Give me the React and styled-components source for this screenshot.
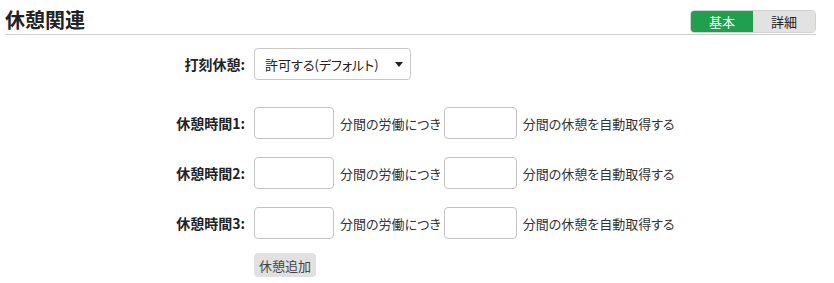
import React from 'react';
import styled, { createGlobalStyle } from 'styled-components';

const GlobalStyle = createGlobalStyle`
    body {
        margin: 0;
        background: #fff;
        font-family: "Noto Sans CJK JP", "Noto Sans", sans-serif;
        color: #333;
    }
`;

const rows = [1, 2, 3];

const App = () => (
    <Page>
        <GlobalStyle />
        <Header>
            <Title>休憩関連</Title>
            <Toggle>
                <ToggleItem active>基本</ToggleItem>
                <ToggleItem>詳細</ToggleItem>
            </Toggle>
        </Header>
        <Form>
            <Row gap={27}>
                <Label>打刻休憩:</Label>
                <Select>
                    <span>許可する(デフォルト)</span>
                    <Caret />
                </Select>
            </Row>
            {rows.map((n) => (
                <Row key={n} gap={n === 3 ? 14 : 18}>
                    <Label>休憩時間{n}:</Label>
                    <Inline>
                        <Input wide />
                        <Text>分間の労働につき</Text>
                        <Input />
                        <Text>分間の休憩を自動取得する</Text>
                    </Inline>
                </Row>
            ))}
            <Row>
                <span />
                <AddButton>休憩追加</AddButton>
            </Row>
        </Form>
    </Page>
);

export default App;

const Page = styled.div`
    width: 834px;
    height: 283px;
    padding: 0 18px 0 5px;
    box-sizing: border-box;
`;

const Header = styled.div`
    display: flex;
    justify-content: space-between;
    align-items: flex-end;
    padding-top: 8px;
    border-bottom: 1px solid #cfcfcf;
`;

const Title = styled.h1`
    margin: 0 0 2px;
    font-size: 20px;
    font-weight: bold;
    line-height: 24px;
    color: #222;
    font-feature-settings: "palt";
`;

const Toggle = styled.div`
    display: flex;
    border: 1px solid #d2d2d2;
    border-radius: 4px;
    overflow: hidden;
    margin-bottom: 1px;
`;

const ToggleItem = styled.div`
    width: 62px;
    height: 21px;
    display: flex;
    align-items: center;
    justify-content: center;
    font-size: 13px;
    background: ${(p) => (p.active ? '#1fa04d' : '#e2e2e2')};
    color: ${(p) => (p.active ? '#fff' : '#222')};
`;

const Form = styled.div`
    display: flex;
    flex-direction: column;
    margin-top: 13px;
`;

const Row = styled.div`
    display: grid;
    grid-template-columns: 240px auto;
    column-gap: 9px;
    align-items: center;
    justify-content: start;
    margin-bottom: ${(p) => p.gap || 0}px;
`;

const Label = styled.div`
    text-align: right;
    font-size: 14px;
    font-weight: bold;
    color: #222;
`;

const Select = styled.div`
    width: 157px;
    height: 32px;
    box-sizing: border-box;
    border: 1px solid #c8c8c8;
    border-radius: 4px;
    display: flex;
    align-items: center;
    justify-content: space-between;
    padding: 0 7px 0 10px;
    font-size: 13px;
    color: #222;
    font-feature-settings: "palt";
`;

const Caret = styled.span`
    width: 0;
    height: 0;
    border-left: 4px solid transparent;
    border-right: 4px solid transparent;
    border-top: 5px solid #222;
`;

const Inline = styled.div`
    display: flex;
    align-items: center;
`;

const Input = styled.div`
    width: ${(p) => (p.wide ? '80px' : '73px')};
    height: 32px;
    box-sizing: border-box;
    border: 1px solid #c4c4c4;
    border-radius: 4px;
`;

const Text = styled.span`
    font-size: 13px;
    color: #333;
    margin: 0 3px 0 6px;
    font-feature-settings: "palt";
`;

const AddButton = styled.div`
    justify-self: start;
    height: 24px;
    display: flex;
    align-items: center;
    padding: 0 5px;
    background: #e1e1e1;
    border-radius: 4px;
    font-size: 13px;
    color: #444;
`;
